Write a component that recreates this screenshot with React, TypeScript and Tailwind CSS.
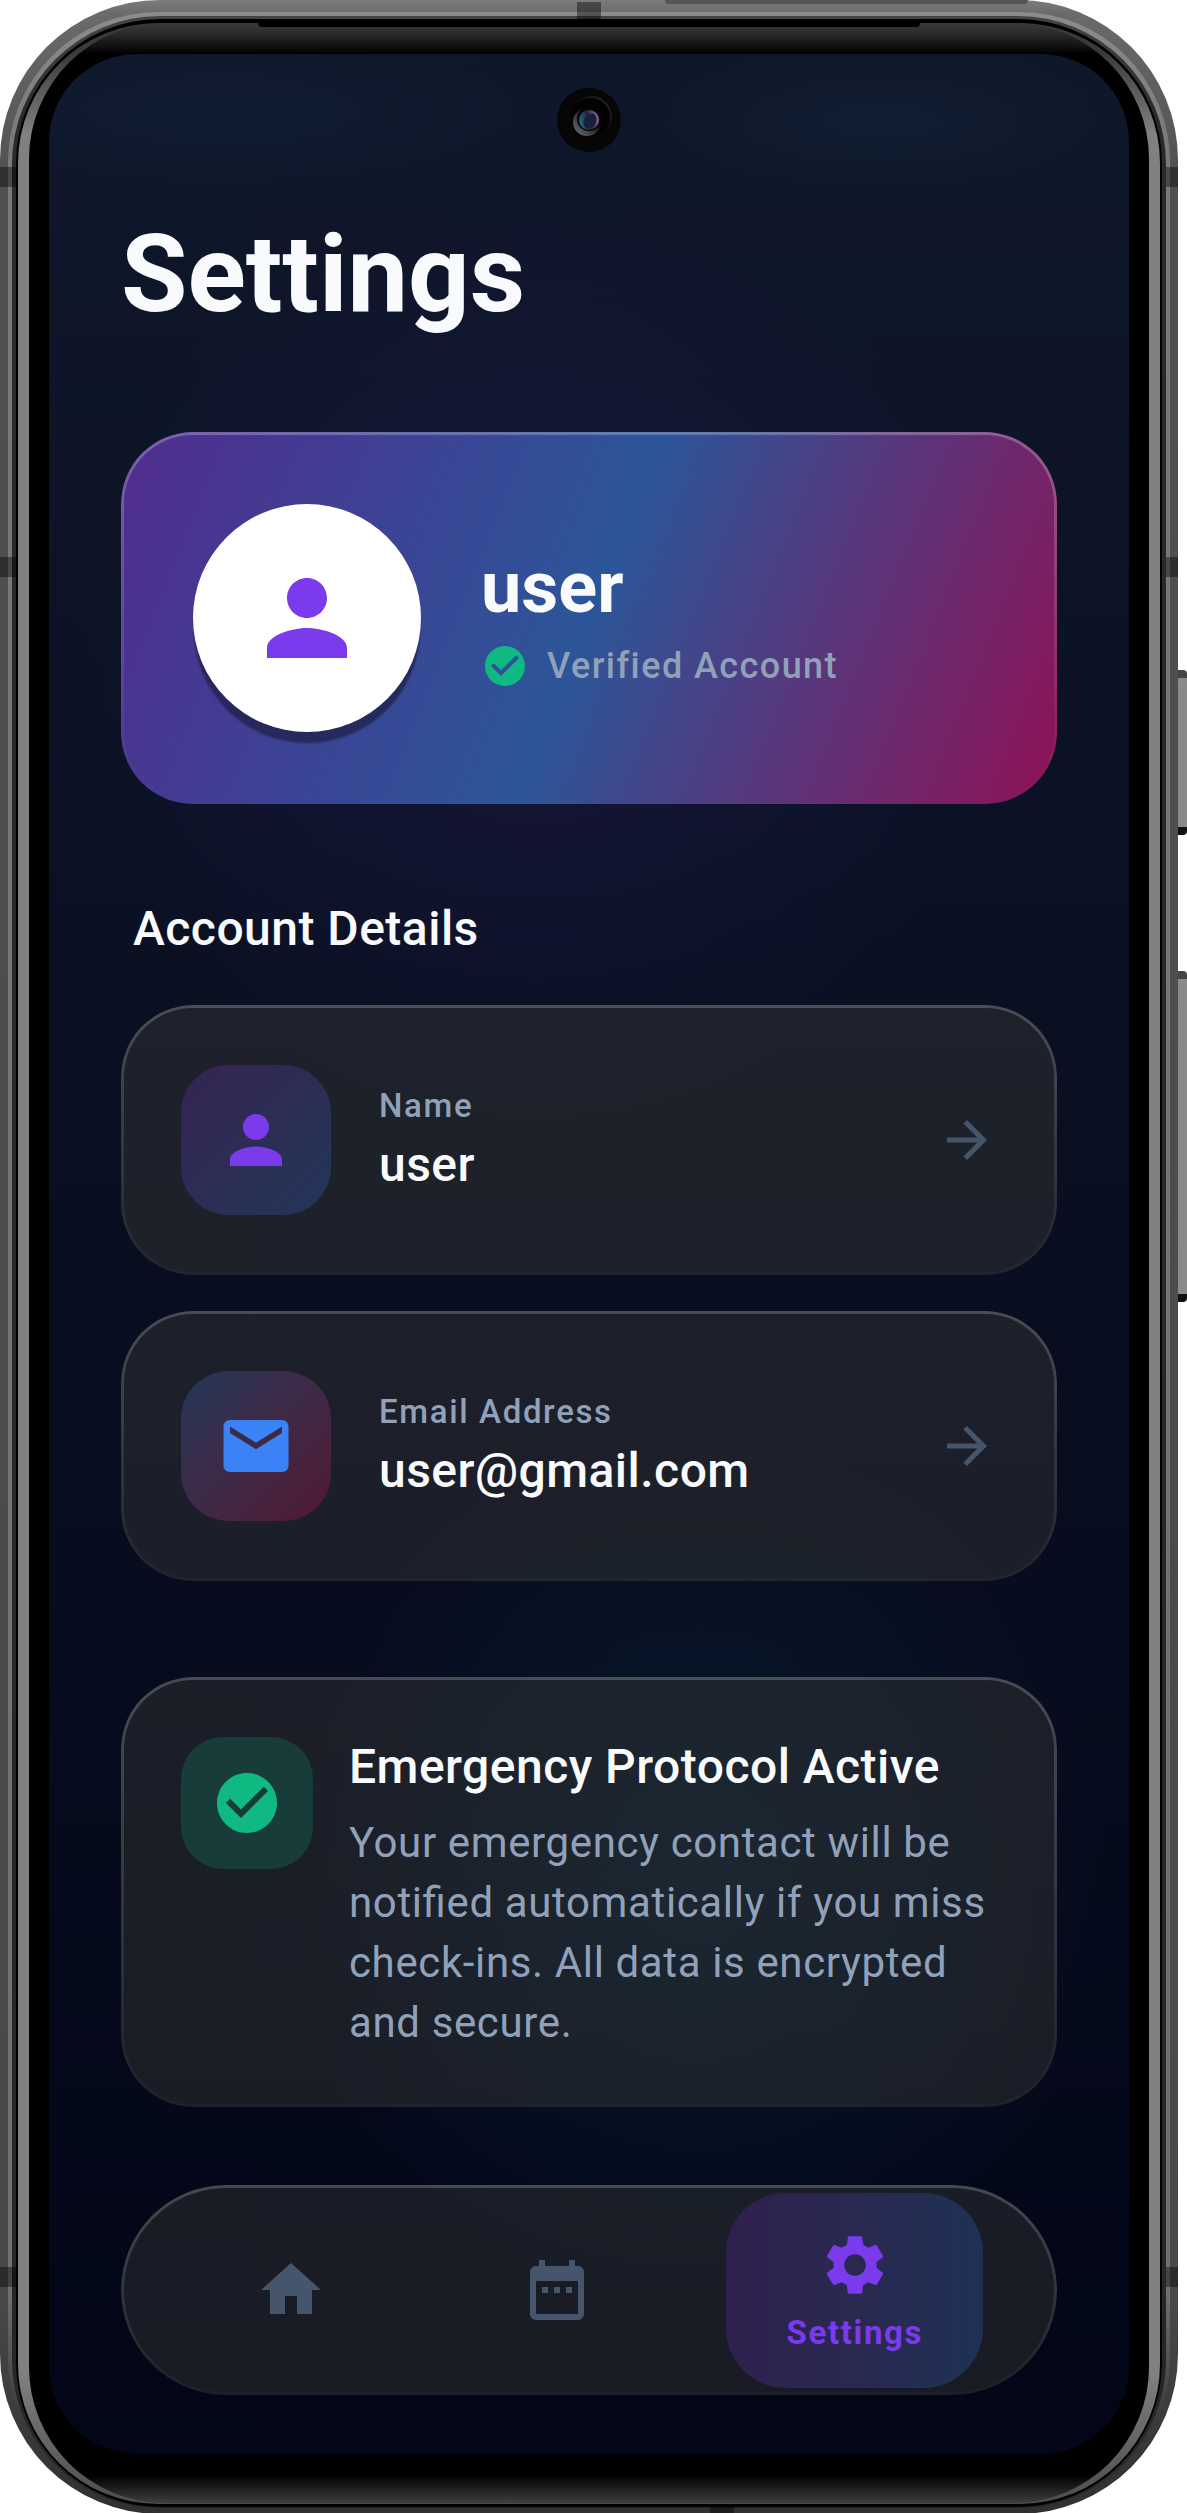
import type { ReactNode } from "react";
import type { IconType } from "react-icons";
import {
  MdArrowForward,
  MdCheckCircle,
  MdDateRange,
  MdEmail,
  MdHome,
  MdPerson,
  MdSettings,
} from "react-icons/md";

const glass =
  "relative bg-[rgba(60,60,58,0.4)] before:pointer-events-none before:absolute before:inset-0 before:rounded-[inherit] before:bg-linear-to-b before:from-white/20 before:to-white/2 before:p-[3px] before:[mask:linear-gradient(#000_0_0)_content-box_exclude,linear-gradient(#000_0_0)]";

function Camera() {
  return (
    <svg
      viewBox="0 0 64 64"
      className="absolute top-[34px] left-1/2 size-16 -translate-x-1/2"
      aria-hidden="true"
    >
      <defs>
        <linearGradient id="rim" x1="0" y1="1" x2="1" y2="0">
          <stop offset="0" stopColor="#777" />
          <stop offset="0.45" stopColor="#333" />
          <stop offset="0.7" stopColor="#050505" />
        </linearGradient>
        <linearGradient id="ring" x1="0" y1="1" x2="1" y2="0">
          <stop offset="0.5" stopColor="#050505" />
          <stop offset="1" stopColor="#2c2c2c" />
        </linearGradient>
        <linearGradient id="lens" x1="0" y1="0.6" x2="1" y2="0.3">
          <stop offset="0" stopColor="#1f6f86" />
          <stop offset="0.5" stopColor="#1d2440" />
          <stop offset="1" stopColor="#a06ab8" />
        </linearGradient>
      </defs>
      <circle cx="32" cy="32" r="32" fill="#060607" />
      <circle cx="34" cy="29" r="20" fill="#020202" stroke="url(#ring)" strokeWidth="2" />
      <circle cx="30" cy="34" r="14" fill="url(#rim)" />
      <circle cx="32" cy="31" r="12" fill="#050505" />
      <circle cx="32" cy="32" r="10" fill="url(#lens)" />
      <ellipse cx="33" cy="33" rx="6" ry="8" fill="#1a1e38" transform="rotate(30 33 33)" />
    </svg>
  );
}

// Metal rim, polished edge and black glass around the screen
function PhoneFrame({ children }: { children: ReactNode }) {
  const mark = "absolute bg-black/40";
  return (
    <div className="bg-white pr-[9px]">
      <div className="relative">
        <div className="absolute top-[670px] -right-[9px] h-[165px] w-3 rounded-r-sm border-y-8 border-t-[#444] border-b-[#111] bg-[#8a8a8a]" />
        <div className="absolute top-[971px] -right-[9px] h-[331px] w-3 rounded-r-sm border-y-8 border-t-[#444] border-b-[#111] bg-[#8a8a8a]" />
        <div className="relative rounded-[160px] bg-[linear-gradient(180deg,#7c7c7c_0,#6a6a6a_14px,#505050_180px,#484848_2300px,#303030_100%)] px-2 pt-[12px] pb-[6px]">
          <div className="rounded-[150px] bg-[linear-gradient(180deg,#8c8c8c_0,#7a7a7a_120px,#707070_2280px,#3c3c3c_2400px,#2c2c2c_100%)] px-[4px] pt-[4px]">
            <div className="rounded-[148px] bg-[linear-gradient(180deg,#444_0,#2a2a2a_100px,#262626_100%)] px-[4px] pt-[3px] pb-px">
              <div className="rounded-[144px] bg-black px-[2px] pt-[4px] pb-[3px]">
                <div className="rounded-[140px] bg-[linear-gradient(180deg,#3a3a3a_0,#3a3a3a_30px,#808080_110px,#808080_2350px,#4c4c4c_100%)] px-[11px] pb-px">
                  <div className="rounded-[136px] bg-[linear-gradient(180deg,#383838_0,#2c2c2c_10px,#000_31px,#000_calc(100%-28px),#3e3e3e_100%)] px-5 pt-[31px] pb-[49px]">
                    {children}
                  </div>
                </div>
              </div>
            </div>
          </div>
          {/* earpiece slot and antenna bands */}
          <div className="absolute top-[22px] right-[258px] left-[258px] h-[5px] rounded-b-sm bg-black" />
          <div className="absolute top-0 right-[150px] left-[665px] h-1 rounded-b-full bg-[#555]" />
          <div className={`${mark} top-[2px] left-[577px] h-[18px] w-6`} />
          <div className={`${mark} bottom-0 left-[710px] h-[9px] w-6`} />
          <div className={`${mark} top-[167px] left-0 h-5 w-4`} />
          <div className={`${mark} top-[557px] left-0 h-5 w-4`} />
          <div className={`${mark} top-[2267px] left-0 h-5 w-4`} />
          <div className={`${mark} top-[167px] right-0 h-5 w-3`} />
          <div className={`${mark} top-[557px] right-0 h-5 w-3`} />
          <div className={`${mark} top-[2267px] right-0 h-5 w-3`} />
        </div>
      </div>
    </div>
  );
}

function ProfileCard() {
  return (
    <section className="relative mt-[92px] flex items-center gap-[60px] rounded-[72px] bg-[linear-gradient(112deg,#512c8e,#2c5599_50%,#8f1156)] p-[72px] before:pointer-events-none before:absolute before:inset-0 before:rounded-[inherit] before:bg-linear-to-b before:from-white/25 before:to-white/0 before:p-[3px] before:[mask:linear-gradient(#000_0_0)_content-box_exclude,linear-gradient(#000_0_0)]">
      <div className="flex size-[228px] shrink-0 items-center justify-center rounded-full bg-white shadow-[0_12px_2px_-1px_rgba(30,30,70,0.7)]">
        <MdPerson className="size-[120px] text-[#7c3aed]" />
      </div>
      <div>
        <h2 className="text-[72px] leading-[84px] font-bold">user</h2>
        <p className="mt-3 flex items-center gap-[18px] text-[36px] leading-[48px] font-medium tracking-[0.04em] text-slate-400">
          <MdCheckCircle className="size-12 text-[#10b981]" />
          Verified Account
        </p>
      </div>
    </section>
  );
}

function DetailRow({
  icon: Icon,
  label,
  value,
  tile,
  tint,
}: {
  icon: IconType;
  label: string;
  value: string;
  tile: string;
  tint: string;
}) {
  return (
    <button
      type="button"
      className={`${glass} flex w-full items-center rounded-[72px] p-[60px] text-left`}
    >
      <span className={`flex size-[150px] shrink-0 items-center justify-center rounded-[48px] ${tile}`}>
        <Icon className={`size-[78px] ${tint}`} />
      </span>
      <span className="ml-12 flex grow flex-col gap-2">
        <span className="text-[33px] leading-[42px] font-medium tracking-wider text-slate-400">
          {label}
        </span>
        <span className="text-[48px] leading-[60px] font-medium tracking-[0.01em]">{value}</span>
      </span>
      <MdArrowForward className="size-[60px] text-slate-600" />
    </button>
  );
}

function ProtocolCard() {
  return (
    <section
      className={`${glass} mt-24 flex items-start gap-9 rounded-[72px] px-[60px] pt-[60px] pb-[54px]`}
    >
      <div className="flex size-[132px] shrink-0 items-center justify-center rounded-[42px] bg-[#183c39]">
        <MdCheckCircle className="size-[72px] text-[#10b981]" />
      </div>
      <div>
        <h3 className="text-[48px] leading-[60px] font-medium tracking-[0.01em]">
          Emergency Protocol Active
        </h3>
        <p className="mt-4 text-[42px] leading-[60px] tracking-[0.015em] text-slate-400 [font-feature-settings:'liga']">
          Your emergency contact will be notified automatically if you miss check-ins. All data is
          encrypted and secure.
        </p>
      </div>
    </section>
  );
}

function BottomNav() {
  return (
    <nav className={`${glass} mt-[78px] flex h-[210px] items-center justify-evenly rounded-full`}>
      <a href="#home" aria-label="Home" className="px-[60px] text-slate-600">
        <MdHome className="size-[72px]" />
      </a>
      <a href="#calendar" aria-label="Calendar" className="px-[60px] text-slate-600">
        <MdDateRange className="size-[72px]" />
      </a>
      <a
        href="#settings"
        aria-current="page"
        className="flex flex-col items-center gap-3 rounded-[60px] bg-linear-to-r from-[#2f204e] to-[#1e3154] px-[60px] py-9 text-[#7c3aed]"
      >
        <MdSettings className="size-[72px]" />
        <span className="text-[33px] leading-[39px] font-bold tracking-wider">Settings</span>
      </a>
    </nav>
  );
}

export default function App() {
  return (
    <PhoneFrame>
      <main className="relative rounded-[88px] bg-[radial-gradient(470px_470px_at_45%_600px,rgba(124,58,237,0.1),transparent),radial-gradient(420px_440px_at_60%_1820px,rgba(6,182,212,0.09),transparent),radial-gradient(360px_90px_at_16%_60px,rgba(20,60,90,0.15),transparent),radial-gradient(260px_80px_at_77%_70px,rgba(24,60,80,0.2),transparent),linear-gradient(180deg,#0f172a,#020617)] px-[72px] pt-[154px] pb-[59px] font-['Roboto',sans-serif] text-slate-50">
        <Camera />
        <h1 className="text-[108px] leading-[132px] font-bold">Settings</h1>
        <ProfileCard />
        <h2 className="mt-[95px] pl-3 text-[48px] leading-[60px] font-medium tracking-[0.01em]">
          Account Details
        </h2>
        <div className="mt-[46px] flex flex-col gap-9">
          <DetailRow
            icon={MdPerson}
            label="Name"
            value="user"
            tile="bg-linear-to-br from-[#332452] to-[#213658]"
            tint="text-[#7c3aed]"
          />
          <DetailRow
            icon={MdEmail}
            label="Email Address"
            value="user@gmail.com"
            tile="bg-linear-to-br from-[#213658] to-[#511634]"
            tint="text-[#3b82f6]"
          />
        </div>
        <ProtocolCard />
        <BottomNav />
      </main>
    </PhoneFrame>
  );
}
